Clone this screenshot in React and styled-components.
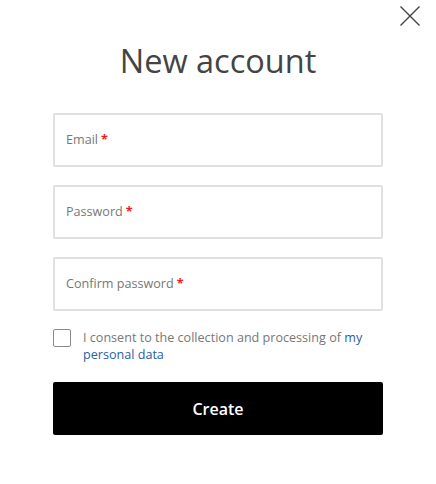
import React from "react";
import styled, { createGlobalStyle } from "styled-components";

const Global = createGlobalStyle`
  html, body { margin: 0; padding: 0; background: #fff; }
  body { font-family: "Open Sans", "Noto Sans", sans-serif; }
  * { box-sizing: border-box; }
`;

const Modal = styled.div`
  position: relative;
  width: 436px;
  height: 484px;
  background: #fff;
  padding: 38px 53px 0;
  display: flex;
  flex-direction: column;
`;

const Close = styled.button`
  position: absolute;
  top: 5px;
  right: 15px;
  width: 22px;
  height: 22px;
  padding: 0;
  border: 0;
  background: none;
  cursor: pointer;
  display: flex;
  align-items: center;
  justify-content: center;
`;

const Title = styled.h1`
  margin: 0 0 29px;
  font-size: 32.5px;
  font-weight: 400;
  line-height: 46px;
  color: #444;
  text-align: center;
`;

const Form = styled.form`
  display: flex;
  flex-direction: column;
  gap: 18px;
`;

const Field = styled.div`
  position: relative;
  height: 54px;
`;

const Input = styled.input`
  width: 100%;
  height: 100%;
  border: 2px solid #e1e1e1;
  border-radius: 2px;
  padding: 0 12px;
  font: inherit;
  font-size: 12.6px;
  color: #333;
  outline: none;
  background: #fff;
`;

const Label = styled.label`
  position: absolute;
  left: 13px;
  top: 50%;
  transform: translateY(-50%);
  margin-top: -1px;
  font-size: 12.6px;
  color: #777;
  pointer-events: none;
`;

const Star = styled.span`
  color: #f01c1c;
  font-weight: 700;
  margin-left: 3px;
`;

const Consent = styled.label`
  display: flex;
  align-items: flex-start;
  gap: 12px;
  font-size: 12.6px;
  line-height: 17px;
  color: #777;
  margin-bottom: 1px;
`;

const Box = styled.span`
  flex: none;
  width: 18px;
  height: 18px;
  border: 1px solid #8a8a8a;
  border-radius: 2px;
  background: #fff;
`;

const Link = styled.a`
  color: #2a5ea5;
  text-decoration: none;
`;

const Submit = styled.button`
  height: 53px;
  width: 100%;
  border: 0;
  border-radius: 2px;
  background: #000;
  color: #fff;
  font-family: inherit;
  font-size: 16px;
  font-weight: 600;
  cursor: pointer;
`;

const fields = [
  { id: "email", label: "Email", type: "email" },
  { id: "password", label: "Password", type: "password" },
  { id: "confirm", label: "Confirm password", type: "password" },
];

export default function App() {
  return (
    <>
      <Global />
      <Modal>
        <Close aria-label="Close">
          <svg width="22" height="22" viewBox="0 0 22 22">
            <path d="M1.5 1.5 L20.5 20.5 M20.5 1.5 L1.5 20.5" stroke="#444" strokeWidth="1.4" fill="none" />
          </svg>
        </Close>
        <Title>New account</Title>
        <Form onSubmit={(e) => e.preventDefault()}>
          {fields.map((f) => (
            <Field key={f.id}>
              <Input id={f.id} type={f.type} />
              <Label htmlFor={f.id}>
                {f.label}
                <Star>*</Star>
              </Label>
            </Field>
          ))}
          <Consent>
            <Box />
            <span>
              I consent to the collection and processing of <Link href="#">my personal data</Link>
            </span>
          </Consent>
          <Submit type="submit">Create</Submit>
        </Form>
      </Modal>
    </>
  );
}
